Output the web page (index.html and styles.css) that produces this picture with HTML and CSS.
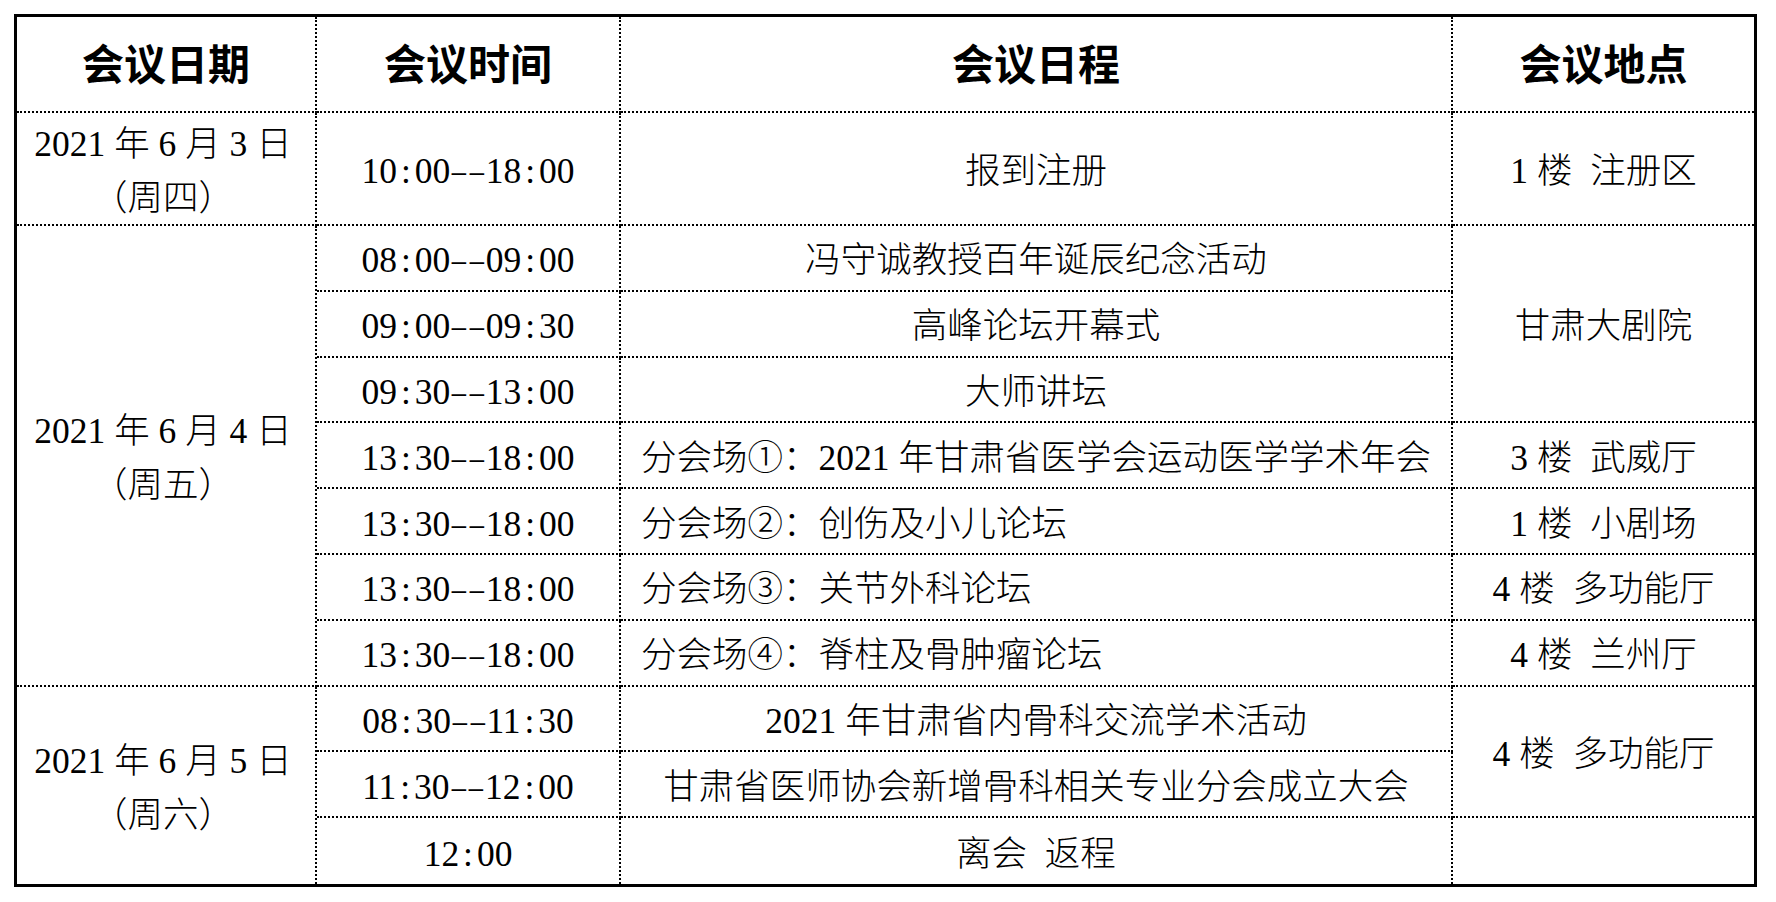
FILE: index.html
```html
<!DOCTYPE html>
<html lang="zh-CN">
<head>
<meta charset="utf-8">
<title>会议日程</title>
<link rel="stylesheet" href="styles.css">
</head>
<body>
<div class="sched">
  <div class="c h c1">会议日期</div>
  <div class="c h c2">会议时间</div>
  <div class="c h c3">会议日程</div>
  <div class="c h c4">会议地点</div>

  <div class="c c1 d"><span>2021 年 6 月 3 日</span><span>（周四）</span></div>
  <div class="c c2">10<span class="s">:</span>00<span class="s m">–</span><span class="s m">–</span>18<span class="s">:</span>00</div>
  <div class="c c3">报到注册</div>
  <div class="c c4">1 楼&ensp;注册区</div>

  <div class="c c1 d r7"><span>2021 年 6 月 4 日</span><span>（周五）</span></div>
  <div class="c c2">08<span class="s">:</span>00<span class="s m">–</span><span class="s m">–</span>09<span class="s">:</span>00</div>
  <div class="c c3">冯守诚教授百年诞辰纪念活动</div>
  <div class="c c4 r3">甘肃大剧院</div>

  <div class="c c2">09<span class="s">:</span>00<span class="s m">–</span><span class="s m">–</span>09<span class="s">:</span>30</div>
  <div class="c c3">高峰论坛开幕式</div>

  <div class="c c2">09<span class="s">:</span>30<span class="s m">–</span><span class="s m">–</span>13<span class="s">:</span>00</div>
  <div class="c c3">大师讲坛</div>

  <div class="c c2">13<span class="s">:</span>30<span class="s m">–</span><span class="s m">–</span>18<span class="s">:</span>00</div>
  <div class="c c3 l">分会场①：2021 年甘肃省医学会运动医学学术年会</div>
  <div class="c c4">3 楼&ensp;武威厅</div>

  <div class="c c2">13<span class="s">:</span>30<span class="s m">–</span><span class="s m">–</span>18<span class="s">:</span>00</div>
  <div class="c c3 l">分会场②：创伤及小儿论坛</div>
  <div class="c c4">1 楼&ensp;小剧场</div>

  <div class="c c2">13<span class="s">:</span>30<span class="s m">–</span><span class="s m">–</span>18<span class="s">:</span>00</div>
  <div class="c c3 l">分会场③：关节外科论坛</div>
  <div class="c c4">4 楼&ensp;多功能厅</div>

  <div class="c c2">13<span class="s">:</span>30<span class="s m">–</span><span class="s m">–</span>18<span class="s">:</span>00</div>
  <div class="c c3 l">分会场④：脊柱及骨肿瘤论坛</div>
  <div class="c c4">4 楼&ensp;兰州厅</div>

  <div class="c c1 d r3 b"><span>2021 年 6 月 5 日</span><span>（周六）</span></div>
  <div class="c c2">08<span class="s">:</span>30<span class="s m">–</span><span class="s m">–</span>11<span class="s">:</span>30</div>
  <div class="c c3">2021 年甘肃省内骨科交流学术活动</div>
  <div class="c c4 r2">4 楼&ensp;多功能厅</div>

  <div class="c c2">11<span class="s">:</span>30<span class="s m">–</span><span class="s m">–</span>12<span class="s">:</span>00</div>
  <div class="c c3">甘肃省医师协会新增骨科相关专业分会成立大会</div>

  <div class="c c2 b">12<span class="s">:</span>00</div>
  <div class="c c3 b">离会&ensp;返程</div>
  <div class="c c4 b"></div>
</div>
</body>
</html>
```

FILE: styles.css
```css
html, body {
  margin: 0;
  background: #fff;
}

body {
  padding: 14px;
}

.sched {
  display: grid;
  box-sizing: border-box;
  width: 1743px;
  border: 3px solid #000;
  grid-template-columns: 300px 304px 832px 301px;
  grid-template-rows: 96px 113px repeat(10, 65.8px);
  font-family: "Liberation Serif", "Noto Sans CJK SC", serif;
  font-size: 35.5px;
  font-weight: 300;
  color: #000;
}

.c {
  box-sizing: border-box;
  display: flex;
  align-items: center;
  justify-content: center;
  text-align: center;
  line-height: 1.52;
  white-space: nowrap;
  padding-top: 7px;
  border-right: 2px dotted #000;
  border-bottom: 2px dotted #000;
}

.c1 { grid-column: 1; }
.c2 { grid-column: 2; }
.c3 { grid-column: 3; }
.c4 { grid-column: 4; border-right: none; }

.r2 { grid-row: span 2; }
.r3 { grid-row: span 3; }
.r7 { grid-row: span 7; }

.b { border-bottom: none; }

.h {
  font-family: "Noto Sans CJK SC", sans-serif;
  font-weight: 700;
  font-size: 42px;
  padding-top: 0;
  padding-bottom: 5px;
}

.d {
  flex-direction: column;
  padding-right: 6px;
}

.l {
  justify-content: flex-start;
  padding-left: 20px;
}

.s {
  display: inline-block;
  width: 0.5em;
  text-align: center;
}

.m {
  transform: scaleX(0.8);
}
```
